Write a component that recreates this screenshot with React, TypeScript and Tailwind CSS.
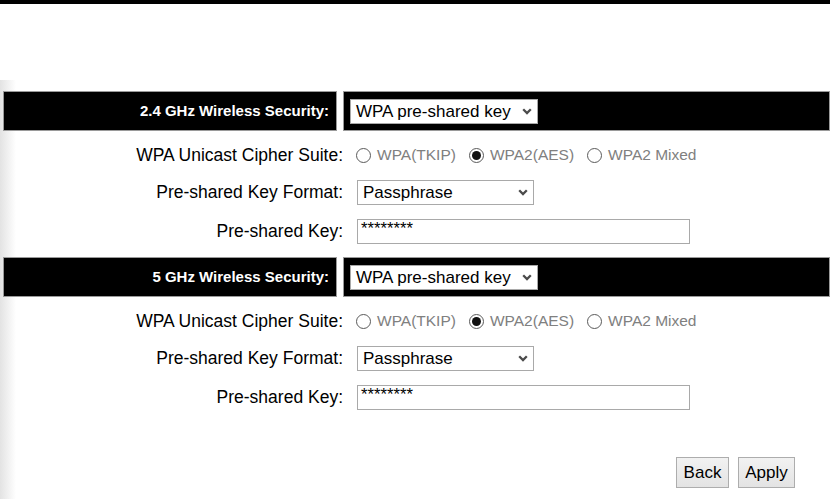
import React from 'react';

const labelCls = "w-[340px] shrink-0 text-right text-[17.5px] text-black";

function Chevron() {
  return (
    <svg width="10" height="7" viewBox="0 0 10 7" className="shrink-0">
      <path d="M1.2 1.3 5 5.1 8.8 1.3" fill="none" stroke="#4b4b4b" strokeWidth="2.3" />
    </svg>
  );
}

function FakeSelect({ value, width }: { value: string; width: string }) {
  return (
    <div className={`${width} h-[25px] flex items-center justify-between border border-[#a9a9a9] bg-white pl-[5px] pr-[5px] text-[17px] leading-none text-black`}>
      <span>{value}</span>
      <Chevron />
    </div>
  );
}

function Radio({ label, checked }: { label: string; checked?: boolean }) {
  return (
    <div className="flex items-center mr-[13px]">
      <span className="w-[15px] h-[15px] rounded-full border border-[#5a5a5a] bg-white flex items-center justify-center">
        {checked && <span className="w-[9px] h-[9px] rounded-full bg-[#111]" />}
      </span>
      <span className="ml-[6px] text-[15.5px] text-[#808080]">{label}</span>
    </div>
  );
}

function SecurityBlock({ band }: { band: string }) {
  return (
    <div>
      {/* black header row */}
      <div className="flex h-[40px]">
        <div className="w-[334px] shrink-0 border border-[#9a9a9a] bg-black flex items-center justify-end pr-[7px]">
          <span className="text-[15px] font-bold text-white">{band} Wireless Security:</span>
        </div>
        <div className="ml-[6px] flex-1 border border-[#9a9a9a] bg-black flex items-center pl-[6px]">
          <FakeSelect value="WPA pre-shared key" width="w-[188px]" />
        </div>
      </div>

      <div className="mt-[6px] flex items-center h-[36px]">
        <div className={labelCls}>WPA Unicast Cipher Suite:</div>
        <div className="ml-[13px] flex items-center">
          <Radio label="WPA(TKIP)" />
          <Radio label="WPA2(AES)" checked />
          <Radio label="WPA2 Mixed" />
        </div>
      </div>

      <div className="flex items-center h-[39px]">
        <div className={labelCls}>Pre-shared Key Format:</div>
        <div className="ml-[14px]">
          <FakeSelect value="Passphrase" width="w-[177px]" />
        </div>
      </div>

      <div className="flex items-center h-[38px]">
        <div className={labelCls}>Pre-shared Key:</div>
        <div className="ml-[14px] w-[333px] h-[25px] border border-[#a9a9a9] bg-white pl-[3px] text-[16.7px] leading-[18px] text-black">
          ********
        </div>
      </div>
    </div>
  );
}

export default function App() {
  return (
    <div className="w-[830px] h-[499px] overflow-hidden bg-white font-['Liberation_Sans',Arial,sans-serif]">
      <div className="h-[4px] bg-black" />
      <div className="h-[76px]" />
      <div className="h-[419px] bg-[linear-gradient(to_right,#e3e3e3,#ffffff_16px)] pt-[11px] pl-[3px]">
        <SecurityBlock band="2.4 GHz" />
        <div className="h-[7px]" />
        <SecurityBlock band="5 GHz" />

        <div className="mt-[41px] flex justify-end pr-[35px] gap-[9px]">
          <button className="w-[53px] h-[31px] border border-[#adadad] bg-[linear-gradient(#f2f2f2,#e3e3e3)] text-[17px] text-black">
            Back
          </button>
          <button className="w-[57px] h-[31px] border border-[#adadad] bg-[linear-gradient(#f2f2f2,#e3e3e3)] text-[17px] text-black">
            Apply
          </button>
        </div>
      </div>
    </div>
  );
}
